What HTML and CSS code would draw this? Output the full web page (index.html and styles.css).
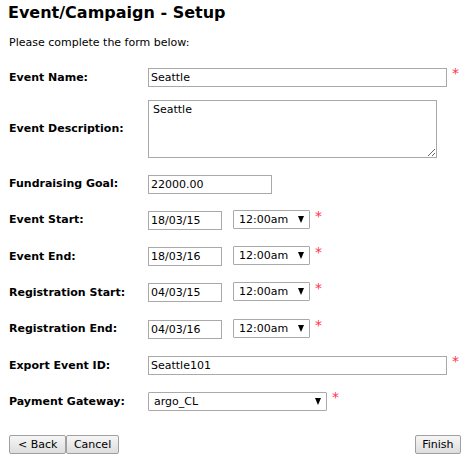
FILE: index.html
```html
<!DOCTYPE html>
<html>
<head>
<meta charset="utf-8">
<link rel="stylesheet" href="styles.css">
</head>
<body>
<div class="page">
  <h1 class="title">Event/Campaign - Setup</h1>
  <p class="intro">Please complete the form below:</p>
  <div class="form">
    <div class="row">
      <label class="label">Event Name:</label>
      <div class="field"><input class="text wide" type="text" value="Seattle"><span class="req">*</span></div>
    </div>
    <div class="row row-desc">
      <label class="label">Event Description:</label>
      <div class="field"><textarea class="area">Seattle</textarea></div>
    </div>
    <div class="row">
      <label class="label">Fundraising Goal:</label>
      <div class="field"><input class="text goal" type="text" value="22000.00"></div>
    </div>
    <div class="row">
      <label class="label">Event Start:</label>
      <div class="field"><input class="text date" type="text" value="18/03/15"><div class="select time"><span>12:00am</span><span class="arrow"></span></div><span class="req">*</span></div>
    </div>
    <div class="row">
      <label class="label">Event End:</label>
      <div class="field"><input class="text date" type="text" value="18/03/16"><div class="select time"><span>12:00am</span><span class="arrow"></span></div><span class="req">*</span></div>
    </div>
    <div class="row">
      <label class="label">Registration Start:</label>
      <div class="field"><input class="text date" type="text" value="04/03/15"><div class="select time"><span>12:00am</span><span class="arrow"></span></div><span class="req">*</span></div>
    </div>
    <div class="row">
      <label class="label">Registration End:</label>
      <div class="field"><input class="text date" type="text" value="04/03/16"><div class="select time"><span>12:00am</span><span class="arrow"></span></div><span class="req">*</span></div>
    </div>
    <div class="row">
      <label class="label">Export Event ID:</label>
      <div class="field"><input class="text wide" type="text" value="Seattle101"><span class="req">*</span></div>
    </div>
    <div class="row">
      <label class="label">Payment Gateway:</label>
      <div class="field"><div class="select gateway"><span>argo_CL</span><span class="arrow"></span></div><span class="req">*</span></div>
    </div>
  </div>
  <div class="buttons">
    <div class="group">
      <button class="btn btn-back">&lt; Back</button><button class="btn btn-narrow">Cancel</button>
    </div>
    <button class="btn btn-narrow">Finish</button>
  </div>
</div>
</body>
</html>
```
FILE: styles.css
```css
html, body {
  margin: 0;
  padding: 0;
  background: #fff;
}
body {
  font-family: Verdana, "DejaVu Sans", sans-serif;
  color: #000;
  width: 471px;
  height: 464px;
  overflow: hidden;
}
.page {
  padding: 2px 10px 0 9px;
}
.title {
  margin: 0 0 0 -1px;
  font-size: 16px;
  line-height: 22px;
  font-weight: bold;
  color: #000;
}
.intro {
  margin: 12px 0 0 0;
  font-size: 11px;
  line-height: 14px;
}
.form {
  display: flex;
  flex-direction: column;
  gap: 17.3px;
  margin-top: 18px;
}
.row {
  display: flex;
  align-items: center;
}
.row-desc {
  margin-top: -4.5px;
  margin-bottom: -0.5px;
}
.label {
  width: 139px;
  flex: none;
  font-size: 11px;
  font-weight: bold;
  line-height: 14px;
}
.field {
  display: flex;
  align-items: flex-start;
}
.text {
  box-sizing: border-box;
  height: 19px;
  border: 1px solid #a9a9a9;
  padding: 0 2px;
  margin: 0;
  font-family: Verdana, "DejaVu Sans", sans-serif;
  font-size: 11px;
  color: #000;
  background: #fff;
  outline: none;
}
.wide { width: 299px; }
.goal { width: 124px; }
.date { width: 74px; }
.area {
  box-sizing: border-box;
  width: 289px;
  height: 58px;
  border: 1px solid #a9a9a9;
  padding: 2px 4px;
  margin: 0;
  font-family: Verdana, "DejaVu Sans", sans-serif;
  font-size: 11px;
  line-height: 13px;
  color: #000;
  resize: both;
}
.select {
  box-sizing: border-box;
  height: 19px;
  border: 1px solid #a9a9a9;
  border-radius: 1px;
  background: #fff;
  display: flex;
  align-items: center;
  justify-content: space-between;
  padding: 0 5px 0 5px;
  font-size: 11px;
  color: #000;
}
.time {
  width: 77px;
  margin-left: 11px;
  margin-top: -1px;
}
.gateway {
  width: 179px;
}
.arrow {
  width: 0;
  height: 0;
  border-left: 3.5px solid transparent;
  border-right: 3.5px solid transparent;
  border-top: 7px solid #000;
}
.req {
  color: #ff3050;
  font-size: 14px;
  line-height: 14px;
  margin-left: 5px;
  margin-top: -2px;
}
.buttons {
  display: flex;
  justify-content: space-between;
  margin-top: 24px;
}
.group {
  display: flex;
}
.btn {
  box-sizing: border-box;
  height: 19px;
  padding: 0 8px;
  margin: 0;
  font-family: Verdana, "DejaVu Sans", sans-serif;
  font-size: 11px;
  color: #000;
  border: 1px solid #a0a0a0;
  border-radius: 2px;
  background: linear-gradient(#f6f6f6, #dddddd);
}
.btn-narrow {
  padding: 0 6.5px;
}
```
